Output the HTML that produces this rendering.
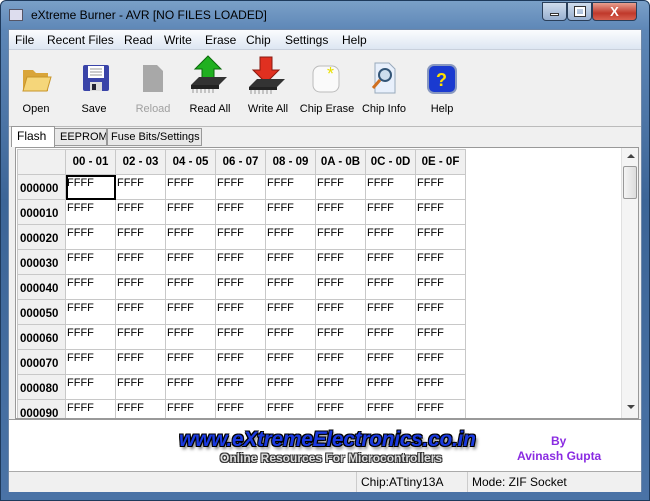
<!DOCTYPE html>
<html><head><style>
*{margin:0;padding:0;box-sizing:border-box}
body{width:650px;height:501px;overflow:hidden;background:#fff;font-family:"Liberation Sans",sans-serif;font-size:12px;position:relative}
.frame{position:absolute;left:0;top:0;width:650px;height:501px;background:linear-gradient(#7aa0c8 0,#5d86b6 30px,#3c6597 200px,#4a73a6 501px);border:1px solid #1e3a5c;border-radius:6px 6px 0 0}
.title{position:absolute;left:30px;top:7px;font-size:12px;color:#000}
.ticon{position:absolute;left:8px;top:8px;width:14px;height:12px;background:#dde;border:1px solid #556}
.tb{position:absolute;top:1px;height:19px;border:1px solid #2a3f5a;border-radius:0 0 4px 4px}
.client{position:absolute;left:8px;top:29px;width:634px;height:463px;background:#f0f0f0;border:1px solid #6d87a8}
.menu{position:absolute;left:0;top:0;width:632px;height:20px;background:linear-gradient(#fbfcfe,#dde6f2);border-bottom:1px solid #c8d0dc}
.menu span{position:absolute;top:3px;font-size:12px}
.btn{position:absolute;top:73px;font-size:11px;text-align:center;width:60px;white-space:nowrap}
.icon{position:absolute}
.tab{position:absolute;top:98px;height:18px;border:1px solid #999;background:#e8e8e8;font-size:11px;padding:2px 3px;white-space:nowrap;overflow:hidden}
.grid{position:absolute;left:6px;top:117px;width:624px;height:272px;border:1px solid #999;background:#fff;overflow:hidden}
table{border-collapse:collapse;table-layout:fixed;position:absolute;left:1px;top:1px}
td{width:50px;height:25px;border:1px solid #c8c8c8;font-size:11px;vertical-align:top;padding:2px 1px 0;color:#000}
td.h{background:#f0f0f0;font-weight:bold;font-size:11.5px;text-align:center;vertical-align:middle;padding:0}
td.r{width:48px;background:#f0f0f0;font-weight:bold;font-size:11.5px;vertical-align:middle;padding:4px 0 0 2px}
.sb{position:absolute;right:0;top:0;width:17px;height:270px;background:#f4f4f4;border-left:1px solid #e0e0e0}
.status{position:absolute;left:0;top:441px;width:632px;height:21px;background:#f0f0f0;border-top:1px solid #aaa;font-size:12px}
</style></head><body>
<div class="frame">
<div class="ticon"></div>
<div class="title">eXtreme Burner - AVR [NO FILES LOADED]</div>
<div class="tb" style="left:541px;width:25px;background:linear-gradient(#cfdcec,#98b0d0)"><div style="position:absolute;left:7px;top:10px;width:9px;height:3px;background:#fff;border:1px solid #333"></div></div>
<div class="tb" style="left:566px;width:25px;background:linear-gradient(#cfdcec,#98b0d0)"><div style="position:absolute;left:7px;top:4px;width:10px;height:9px;border:2px solid #fff;outline:1px solid #333"></div></div>
<div class="tb" style="left:591px;width:45px;background:linear-gradient(#e8a090,#c0392b 60%,#d86050);color:#fff;font-weight:bold;text-align:center;font-size:13px;line-height:17px">X</div>
</div>
<div class="client">
<div class="menu">
<span style="left:6px">File</span><span style="left:38px">Recent Files</span><span style="left:115px">Read</span><span style="left:155px">Write</span><span style="left:196px">Erase</span><span style="left:237px">Chip</span><span style="left:276px">Settings</span><span style="left:333px">Help</span>
</div>
<svg class="icon" style="left:12px;top:34px" width="32" height="30"><path d="M2 6h10l3 3h12v18H2z" fill="#d9a53a"/><path d="M6 13h24l-4 14H2z" fill="#f5d67a" stroke="#c8952a"/></svg>
<svg class="icon" style="left:72px;top:33px" width="30" height="30"><rect x="2" y="2" width="26" height="26" rx="2" fill="#3a44a8"/><rect x="7" y="3" width="16" height="12" fill="#fff"/><path d="M9 6h12M9 9h12M9 12h12" stroke="#999"/><rect x="9" y="19" width="12" height="9" fill="#ddd"/><rect x="11" y="21" width="4" height="6" fill="#223"/></svg>
<svg class="icon" style="left:130px;top:33px" width="28" height="30"><path d="M4 2h14l6 6v21H4z" fill="#a8a8a8"/></svg>
<svg class="icon" style="left:178px;top:25px" width="44" height="40"><path d="M21 1L8 14h7v12h12V14h7z" fill="#20b020" stroke="#0a6a0a"/><path d="M4 30l8-8h28l-8 8z" fill="#333"/><path d="M4 30h28v4H4z" fill="#222"/><path d="M6 34v4M10 34v4M14 34v4M18 34v4M22 34v4M26 34v4" stroke="#999"/></svg>
<svg class="icon" style="left:236px;top:25px" width="44" height="40"><path d="M21 28L8 15h7V2h12v13h7z" fill="#e03020" stroke="#8a1a10"/><path d="M4 32l8-8h28l-8 8z" fill="#333" /><path d="M4 32h28v3H4z" fill="#222"/><path d="M6 35v4M10 35v4M14 35v4M18 35v4M22 35v4M26 35v4" stroke="#999"/></svg>
<svg class="icon" style="left:302px;top:33px" width="32" height="32"><rect x="2" y="3" width="26" height="26" rx="7" fill="#fafafa" stroke="#bbb"/><text x="16" y="17" font-size="18" fill="#e8e000" font-family="Liberation Sans">*</text></svg>
<svg class="icon" style="left:360px;top:31px" width="30" height="34"><path d="M6 2h14l6 6v24H6z" fill="#e8f0fc" stroke="#9ab"/><circle cx="16" cy="14" r="6" fill="#cde" stroke="#357" stroke-width="2"/><path d="M11 19l-7 8" stroke="#d07020" stroke-width="3"/></svg>
<svg class="icon" style="left:418px;top:34px" width="30" height="30"><rect x="1" y="1" width="28" height="28" rx="6" fill="#1a3ad0" stroke="#8898c0" stroke-width="2"/><text x="9" y="22" font-size="18" font-weight="bold" fill="#ffe000" font-family="Liberation Sans">?</text></svg>
<div class="btn" style="left:-3px">Open</div>
<div class="btn" style="left:55px">Save</div>
<div class="btn" style="left:114px;color:#a0a0a0">Reload</div>
<div class="btn" style="left:171px">Read All</div>
<div class="btn" style="left:229px">Write All</div>
<div class="btn" style="left:288px;width:60px">Chip Erase</div>
<div class="btn" style="left:345px">Chip Info</div>
<div class="btn" style="left:403px">Help</div>
<div style="position:absolute;left:0;top:96px;width:632px;border-top:1px solid #bbb"></div>
<div class="tab" style="left:45px;width:53px;padding-left:5px">EEPROM</div>
<div class="tab" style="left:98px;width:95px">Fuse Bits/Settings</div>
<div class="tab" style="left:2px;top:96px;height:21px;width:44px;background:#fff;border-bottom:none;font-size:12px;padding-left:5px">Flash</div>
<div class="grid">
<table>
<tr><td class="h r" style="padding:0"></td><td class="h">00 - 01</td><td class="h">02 - 03</td><td class="h">04 - 05</td><td class="h">06 - 07</td><td class="h">08 - 09</td><td class="h">0A - 0B</td><td class="h">0C - 0D</td><td class="h">0E - 0F</td></tr>
<tr><td class="r">000000</td><td style="outline:2px solid #000;outline-offset:-2px">FFFF</td><td>FFFF</td><td>FFFF</td><td>FFFF</td><td>FFFF</td><td>FFFF</td><td>FFFF</td><td>FFFF</td></tr>
<tr><td class="r">000010</td><td>FFFF</td><td>FFFF</td><td>FFFF</td><td>FFFF</td><td>FFFF</td><td>FFFF</td><td>FFFF</td><td>FFFF</td></tr>
<tr><td class="r">000020</td><td>FFFF</td><td>FFFF</td><td>FFFF</td><td>FFFF</td><td>FFFF</td><td>FFFF</td><td>FFFF</td><td>FFFF</td></tr>
<tr><td class="r">000030</td><td>FFFF</td><td>FFFF</td><td>FFFF</td><td>FFFF</td><td>FFFF</td><td>FFFF</td><td>FFFF</td><td>FFFF</td></tr>
<tr><td class="r">000040</td><td>FFFF</td><td>FFFF</td><td>FFFF</td><td>FFFF</td><td>FFFF</td><td>FFFF</td><td>FFFF</td><td>FFFF</td></tr>
<tr><td class="r">000050</td><td>FFFF</td><td>FFFF</td><td>FFFF</td><td>FFFF</td><td>FFFF</td><td>FFFF</td><td>FFFF</td><td>FFFF</td></tr>
<tr><td class="r">000060</td><td>FFFF</td><td>FFFF</td><td>FFFF</td><td>FFFF</td><td>FFFF</td><td>FFFF</td><td>FFFF</td><td>FFFF</td></tr>
<tr><td class="r">000070</td><td>FFFF</td><td>FFFF</td><td>FFFF</td><td>FFFF</td><td>FFFF</td><td>FFFF</td><td>FFFF</td><td>FFFF</td></tr>
<tr><td class="r">000080</td><td>FFFF</td><td>FFFF</td><td>FFFF</td><td>FFFF</td><td>FFFF</td><td>FFFF</td><td>FFFF</td><td>FFFF</td></tr>
<tr><td class="r">000090</td><td>FFFF</td><td>FFFF</td><td>FFFF</td><td>FFFF</td><td>FFFF</td><td>FFFF</td><td>FFFF</td><td>FFFF</td></tr>
</table>
<div class="sb"><div style="position:absolute;left:5px;top:6px;border:4px solid transparent;border-bottom:4px solid #444;border-top:none;width:0"></div>
<div style="position:absolute;left:1px;top:18px;width:14px;height:33px;border:1px solid #999;border-radius:2px;background:linear-gradient(90deg,#f4f4f4,#dcdcdc)"></div>
<div style="position:absolute;left:5px;top:257px;border:4px solid transparent;border-top:4px solid #444;border-bottom:none;width:0"></div></div>
</div>
<div style="position:absolute;left:0;top:389px;width:632px;height:52px;background:#fff;border-top:1px solid #999">
<div style="position:absolute;left:170px;top:8px;font-size:21px;font-weight:bold;font-style:italic;color:#1a3ae0;letter-spacing:-0.3px;white-space:nowrap;text-shadow:1px 1px 0 #000,-1px -1px 0 #000,1px -1px 0 #000,-1px 1px 0 #000,2px 3px 3px #666">www.eXtremeElectronics.co.in</div>
<div style="position:absolute;left:211px;top:31px;font-size:12px;font-weight:bold;color:#ddd;white-space:nowrap;text-shadow:1px 1px 0 #333,-1px -1px 0 #333,1px -1px 0 #333,-1px 1px 0 #333">Online Resources For Microcontrollers</div>
<div style="position:absolute;left:542px;top:14px;font-size:12px;font-weight:bold;color:#8a2be2">By</div>
<div style="position:absolute;left:508px;top:29px;font-size:12px;font-weight:bold;color:#8a2be2">Avinash Gupta</div>
</div>
<div class="status">
<div style="position:absolute;left:347px;top:0;height:20px;border-left:1px solid #ccc;padding:3px 4px">Chip:ATtiny13A</div>
<div style="position:absolute;left:458px;top:0;height:20px;border-left:1px solid #ccc;padding:3px 4px">Mode: ZIF Socket</div>
</div>
</div>
</body></html>
